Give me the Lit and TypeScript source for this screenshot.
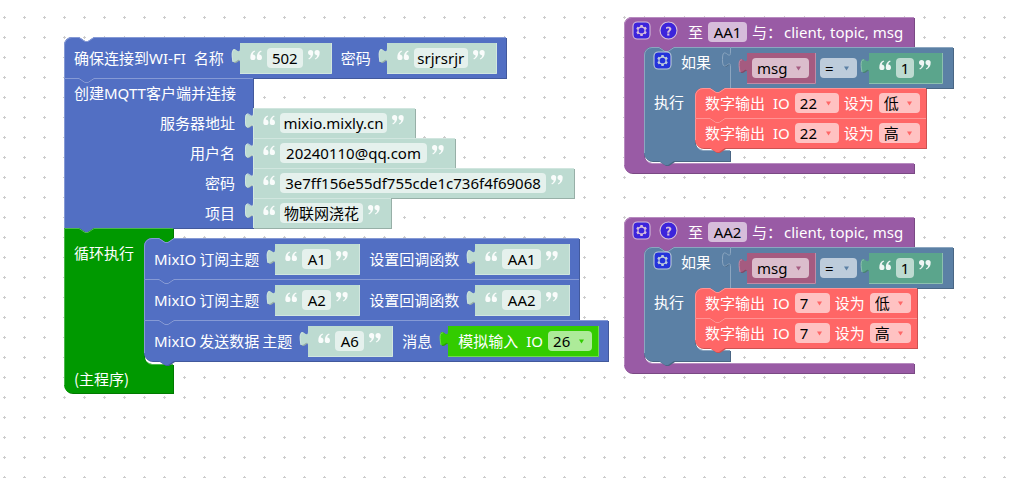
import { LitElement, html, svg, css, nothing } from 'lit';
import { customElement, property, state } from 'lit/decorators.js';
import { classMap } from 'lit/directives/class-map.js';
import { styleMap } from 'lit/directives/style-map.js';

const NOTCH = 'l6,4 3,0 6,-4';
const NOTCH_BACK = 'l-6,4 -3,0 -6,-4';
const TAB_UP = 'c0,-10 -8,8 -8,-7.5 s8,2.5 8,-7.5';

/** Draws the outline of the block that contains it, from that block's measured parts. */
@customElement('block-shape')
export class BlockShape extends LitElement {
  @property() kind: 'statement' | 'value' | 'procedure' = 'statement';
  @property({ type: Boolean }) first = false;
  @property({ type: Boolean }) last = false;
  @property({ type: Boolean }) end = false;
  @property({ type: Boolean }) inset = false;
  @state() private box = { w: 0, h: 0, cx: 0, cy: 0, cb: 0 };
  private observer?: ResizeObserver;

  static styles = css`
    :host { position: absolute; inset: 0; z-index: -1; pointer-events: none; }
    svg { display: block; width: 100%; height: 100%; overflow: visible; }
    .fill { fill: var(--c); }
    .dark { fill: color-mix(in srgb, var(--c) 80%, black); }
    .light { fill: none; stroke: color-mix(in srgb, var(--c) 70%, white); stroke-width: 1; }
  `;

  connectedCallback() {
    super.connectedCallback();
    this.observer = new ResizeObserver(() => this.measure());
    this.observer.observe(this.parentElement!);
  }

  disconnectedCallback() {
    super.disconnectedCallback();
    this.observer?.disconnect();
  }

  private measure() {
    const block = this.parentElement!;
    const r = block.getBoundingClientRect();
    const edge = block.querySelector(':scope > .edge, :scope > .line > .edge');
    const cavity = block.querySelector(':scope > .middle > .cavity');
    const w = Math.round(edge ? edge.getBoundingClientRect().right - r.left : r.width);
    const c = cavity?.getBoundingClientRect();
    this.box = {
      w,
      h: Math.round(r.height),
      cx: c ? Math.round(c.left - r.left) : 0,
      cy: c ? Math.round(c.top - r.top) : 0,
      cb: c ? Math.round(c.bottom - r.top) : 0,
    };
  }

  render() {
    const { w, h, cx, cy, cb } = this.box;
    if (!w) return nothing;
    let outline: string;
    let light: string;
    if (this.kind === 'value') {
      outline = `M0,0 H${w} V${h} H0 V20 ${TAB_UP} Z`;
      light = `M.5,${h} V20 ${TAB_UP} V.5 H${w}`;
      if (this.inset) light = `M0,${h + 0.5} H${w + 0.5} V0 M-5,7 C-9,6 -8,14 -7,19`;
    } else {
      const proc = this.kind === 'procedure';
      const round = this.first || proc;
      const start = round ? 'M0,8 A8,8 0 0 1 8,0' : 'M0,0';
      const top = proc ? '' : `H15 ${NOTCH}`;
      const hole = cb
        ? `V${cy} H${cx + 30} ${NOTCH_BACK} H${cx + 8} a8,8 0 0 0 -8,8 V${cb - 8} a8,8 0 0 0 8,8 H${w}`
        : '';
      const bump = proc || this.end ? '' : `H30 ${NOTCH_BACK}`;
      const bottom = this.last || proc ? `H8 a8,8 0 0 1 -8,-8` : 'H0';
      outline = `${start} ${top} H${w} ${hole} V${h} ${bump} ${bottom} Z`;
      light = `M.5,${h - (this.last || proc ? 8 : 0)} V${round ? 8 : 0.5} ` +
        `${round ? 'A7.5,7.5 0 0 1 8,.5' : ''} ${proc ? '' : `H15 ${NOTCH}`} H${w}`;
      if (cb) light += ` M${cx + 3},${cb - 2} a8,8 0 0 0 5,2.5 H${w}`;
    }
    return html`<svg aria-hidden="true">
      ${svg`<path class="dark" d=${outline} transform="translate(1 1)" />
      <path class="fill" d=${outline} />
      <path class="light" d=${light} />`}
    </svg>`;
  }
}

const QUOTE =
  'M0,2.6 a2.6,2.6 0 0 1 5.2,0 c0,3.5 -1.5,5.8 -4.2,6.9 l-.7,-1 c1.5,-.7 2.3,-1.7 2.4,-3.1 C1.2,5.4 0,4.3 0,2.6z';

const quote = (open: boolean) => html`<svg class="quote" viewBox="0 0 12 10" aria-hidden="true">
  <g transform=${open ? 'rotate(180 6 5)' : ''}>
    <path d=${QUOTE} /><path d=${QUOTE} transform="translate(6.5 0)" />
  </g>
</svg>`;

const GEAR =
  'm4.203,7.296 0,1.368 -0.92,0.677 -0.11,0.41 0.9,1.559 0.41,0.11 1.043,-0.457 1.187,0.683 0.127,1.134 0.3,0.3 1.8,0 0.3,-0.299 0.127,-1.138 1.185,-0.682 1.046,0.458 0.409,-0.11 0.9,-1.559 -0.11,-0.41 -0.92,-0.677 0,-1.366 0.92,-0.677 0.11,-0.41 -0.9,-1.559 -0.409,-0.109 -1.046,0.458 -1.185,-0.682 -0.127,-1.138 -0.3,-0.299 -1.8,0 -0.3,0.3 -0.126,1.135 -1.187,0.682 -1.043,-0.457 -0.41,0.11 -0.899,1.559 0.108,0.409z';

const gear = html`<button class="icon" type="button" aria-label="设置">
  <svg viewBox="0 0 16 16">
    <rect class="plate" x="0" y="0" width="16" height="16" rx="4" />
    <path class="mark" d=${GEAR} />
    <circle class="hub" cx="8" cy="8" r="2.7" />
  </svg>
</button>`;

const help = html`<button class="icon" type="button" aria-label="帮助">
  <svg viewBox="0 0 16 16">
    <circle class="plate" cx="8" cy="8" r="8" />
    <path class="mark" d="m6.8,10h2c0.003,-0.617 0.271,-0.962 0.633,-1.266 2.875,-2.405 0.607,-5.534 -3.765,-3.874v1.7c3.12,-1.657 3.698,0.118 2.336,1.25 -1.201,0.998 -1.201,1.528 -1.204,2.19z" />
    <rect class="mark" x="6.8" y="10.78" width="2" height="2" />
  </svg>
</button>`;

const field = (value: string, width: number, label: string, cjk = false) => html`<input
  class=${classMap({ field: true, cjk })} type="text" .value=${value} aria-label=${label}
  spellcheck="false" style=${styleMap({ width: `${width}px` })} />`;

const dropdown = (value: string, width: number, label: string, cjk = false) => html`<span class="drop">
  <select class=${classMap({ field: true, cjk })} aria-label=${label} style=${styleMap({ width: `${width}px` })}>
    <option>${value}</option>
  </select>
  <svg class="arrow" viewBox="0 0 6 5" aria-hidden="true"><path d="M0,0H6L3,5z" /></svg>
</span>`;

const text = (value: string, width: number, label: string, opts: { inset?: boolean; solid?: boolean; cjk?: boolean } = {}) =>
  html`<div class=${classMap({ block: true, value: true, row: true, mint: !opts.solid, teal: !!opts.solid })}>
    <block-shape kind="value" ?inset=${opts.inset}></block-shape>
    ${quote(true)}${field(value, width, label, opts.cjk)}${quote(false)}
  </div>`;

const t = (s: string) => html`<span class="cjk">${s}</span>`;
const l = (s: string) => html`<span class="latin">${s}</span>`;

@customElement('app-root')
export class AppRoot extends LitElement {
  static styles = css`
    :host { display: block; }
    * { box-sizing: border-box; }
    .workspace {
      position: relative; min-height: 100vh; overflow: hidden; background: #fff; color: #fff;
      font: 15px/20px "Noto Sans", "Noto Sans CJK SC", sans-serif; white-space: nowrap;
    }
    .grid { position: absolute; inset: 0; width: 100%; height: 100%; }
    .grid path { stroke: #ccc; stroke-width: 1; }
    .stack { position: absolute; display: flex; flex-direction: column; align-items: flex-start; }
    .main { left: 64px; top: 37px; }
    .aa1 { left: 624px; top: 17px; }
    .aa2 { left: 624px; top: 217px; }
    .cjk { font-family: "Noto Sans CJK SC", sans-serif; }

    .block { position: relative; isolation: isolate; }
    .row { display: flex; align-items: center; }
    .line { display: flex; }
    .blue { --c: #526fc3; }
    .mint { --c: #bddbd1; }
    .teal { --c: #5ba58c; }
    .loop { --c: #009900; }
    .purple { --c: #995ba5; }
    .logic { --c: #5b80a5; }
    .red { --c: #ff6666; }
    .plum { --c: #a55b80; }
    .lime { --c: #33cc00; }

    .value { height: 30px; padding: 0 11px 0 10px; gap: 5px; flex: none; }
    .tall { height: 41px; padding: 0 10px; gap: 10px; }
    .tall > .value { margin-left: 6px; }
    .name { display: flex; align-items: baseline; gap: 3px; }
    .wide { gap: 8px; }
    .pin { height: 30px; padding: 0 6px 0 10px; gap: 5px; }
    .value.tight { padding: 0 6px 0 5px; }

    .inputs { display: grid; grid-template-columns: 189px auto; grid-auto-rows: 30px; align-items: center; }
    .inputs > .title { padding-left: 10px; }
    .inputs > .tag { padding-right: 18px; text-align: right; }
    .inputs > .value { justify-self: start; }

    .middle { display: flex; }
    .cavity { display: flex; flex-direction: column; align-items: flex-start; padding-bottom: 2px; }
    .loop > .edge { width: 109px; height: 10px; }
    .loop > .middle > .spine { width: 80px; padding: 5px 0 0 10px; }
    .loop > .middle > .cavity { padding-bottom: 3px; }
    .loop > .foot { height: 29px; padding: 5px 10px; }
    .purple > .edge { width: max-content; height: 30px; padding: 0 11px 0 9px; gap: 5px; }
    .purple > .middle > .spine { width: 20px; }
    .purple > .foot { height: 10px; }
    .logic > .foot { height: 11px; }
    .params { margin-left: -3px; }
    .edge > .icon + .icon { margin-left: 5px; }
    .purple > .edge > .icon + .cjk { margin-left: 6px; }
    .logic > .line > .edge { width: 86px; padding: 5px 0 0 10px; gap: 10px; display: flex; align-items: flex-start; }
    .logic > .middle > .spine { width: 51px; padding: 4px 0 0 10px; }
    .compare { height: 41px; padding: 0 11px 0 17px; gap: 5px; }
    .compare > .teal { margin-left: 7px; }

    .field {
      display: block; height: 20px; margin: 0; padding: 0 5px; border: 0; border-radius: 4px; outline: none;
      background: rgb(255 255 255 / .6); color: #000; font-family: inherit; font-size: 15px; line-height: 20px;
      appearance: none;
    }
    .field.cjk { font-family: "Noto Sans CJK SC", sans-serif; }
    input.field { padding: 0 2px; text-align: center; }
    .drop { position: relative; display: block; }
    .arrow { position: absolute; right: 8px; top: 8px; width: 5px; height: 5px; fill: var(--c); pointer-events: none; }
    .quote { width: 12px; height: 10px; margin-top: 7px; fill: #fff; fill-opacity: .9; align-self: flex-start; }
    .icon { width: 17px; height: 17px; padding: 0; border: 0; background: none; opacity: .6; align-self: flex-start; margin-top: 5px; }
    .logic .icon { margin-top: 0; }
    .icon svg { display: block; width: 17px; height: 17px; overflow: visible; }
    .plate { fill: #00f; stroke: #fff; stroke-width: 1; }
    .mark { fill: #fff; }
    .hub { fill: #00f; }
  `;

  private output(pin: string, width: number, level: string, first: boolean) {
    return html`<div class="block red row pin">
      <block-shape ?first=${first} ?last=${!first}></block-shape>
      <span class="name wide">${t('数字输出')}${l('IO')}</span>
      ${dropdown(pin, width, 'IO', false)}
      ${t('设为')}
      ${dropdown(level, 41, '设为', true)}
    </div>`;
  }

  private procedure(name: string, place: string, pin: string, width: number) {
    return html`<section class="stack ${place}">
      <div class="block purple">
        <block-shape kind="procedure"></block-shape>
        <div class="edge row">
          ${gear}${help}${t('至')}${field(name, 39, '至')}${t('与：')}
          <span class="latin params">client, topic, msg</span>
        </div>
        <div class="middle">
          <div class="spine"></div>
          <div class="cavity">
            <div class="block logic">
              <block-shape first last></block-shape>
              <div class="line">
                <div class="edge">${gear}${t('如果')}</div>
                <div class="block logic row compare">
                  <block-shape kind="value"></block-shape>
                  <div class="block plum value row tight">
                    <block-shape kind="value" inset></block-shape>
                    ${dropdown('msg', 57, 'msg')}
                  </div>
                  ${dropdown('=', 37, '=')}
                  ${text('1', 18, '1', { inset: true, solid: true })}
                </div>
              </div>
              <div class="middle">
                <div class="spine">${t('执行')}</div>
                <div class="cavity">
                  ${this.output(pin, width, '低', true)}${this.output(pin, width, '高', false)}
                </div>
              </div>
              <div class="foot"></div>
            </div>
          </div>
        </div>
        <div class="foot"></div>
      </div>
    </section>`;
  }

  private subscribe(topic: string, callback: string, first: boolean) {
    return html`<div class="block blue row tall">
      <block-shape ?first=${first}></block-shape>
      <span class="name">${l('MixIO')}${t('订阅主题')}</span>
      ${text(topic, 29, '订阅主题', { inset: true })}
      ${t('设置回调函数')}
      ${text(callback, 39, '设置回调函数', { inset: true })}
    </div>`;
  }

  render() {
    return html`<main class="workspace">
      <svg class="grid" aria-hidden="true">
        <defs>
          <pattern id="dots" x="4" y="17" width="20" height="20" patternUnits="userSpaceOnUse" patternTransform="translate(-10 -10)">
            <path d="M9,10.5H12M10.5,9V12" />
          </pattern>
        </defs>
        <rect width="100%" height="100%" fill="url(#dots)" />
      </svg>

      <section class="stack main">
        <div class="block blue row tall">
          <block-shape first></block-shape>
          <span class="name wide"><span>${t('确保连接到')}${l('WI-FI')}</span>${t('名称')}</span>
          ${text('502', 36, '名称', { inset: true })}
          ${t('密码')}
          ${text('srjrsrjr', 54, '密码', { inset: true })}
        </div>

        <div class="block blue inputs">
          <block-shape></block-shape>
          <div class="title edge">${t('创建')}${l('MQTT')}${t('客户端并连接')}</div><span></span>
          <div class="tag">${t('服务器地址')}</div>${text('mixio.mixly.cn', 107, '服务器地址')}
          <div class="tag">${t('用户名')}</div>${text('20240110@qq.com', 147, '用户名')}
          <div class="tag">${t('密码')}</div>${text('3e7ff156e55df755cde1c736f4f69068', 266, '密码')}
          <div class="tag">${t('项目')}</div>${text('物联网浇花', 83, '项目', { cjk: true })}
        </div>

        <div class="block loop">
          <block-shape last end></block-shape>
          <div class="edge"></div>
          <div class="middle">
            <div class="spine">${t('循环执行')}</div>
            <div class="cavity">
              ${this.subscribe('A1', 'AA1', true)}
              ${this.subscribe('A2', 'AA2', false)}
              <div class="block blue row tall">
                <block-shape last></block-shape>
                <span class="name">${l('MixIO')}${t('发送数据')}${t('主题')}</span>
                ${text('A6', 29, '主题', { inset: true })}
                ${t('消息')}
                <div class="block lime value row pin">
                  <block-shape kind="value" inset></block-shape>
                  <span class="name wide">${t('模拟输入')}${l('IO')}</span>
                  ${dropdown('26', 44, 'IO')}
                </div>
              </div>
            </div>
          </div>
          <div class="foot">${t('(主程序)')}</div>
        </div>
      </section>

      ${this.procedure('AA1', 'aa1', '22', 44)}
      ${this.procedure('AA2', 'aa2', '7', 35)}
    </main>`;
  }
}
